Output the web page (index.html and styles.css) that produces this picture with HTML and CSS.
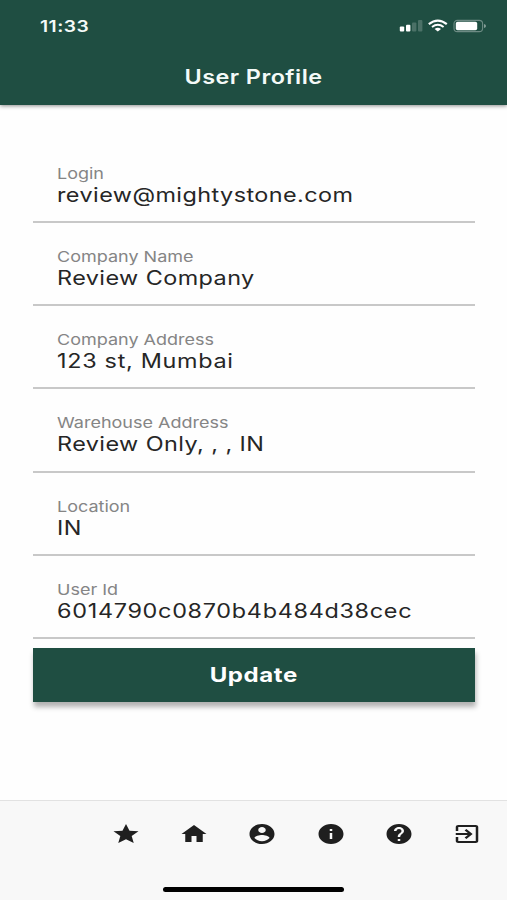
FILE: index.html
```html
<!DOCTYPE html>
<html lang="en">
<head>
<meta charset="utf-8">
<title>User Profile</title>
<link rel="stylesheet" href="styles.css">
</head>
<body>
<div class="screen">
  <header class="header">
    <div class="status">
      <span class="time">11:33</span>
      <svg class="indicators" width="88" height="16" viewBox="0 0 88 16">
        <g fill="#fff">
          <rect x="0.8" y="8.6" width="4.4" height="5" rx="1"/>
          <rect x="7" y="6.8" width="4.4" height="6.8" rx="1"/>
          <rect x="13" y="4.4" width="4.4" height="9.2" rx="1" opacity=".2"/>
          <rect x="19" y="2" width="4.4" height="11.6" rx="1" opacity=".2"/>
        </g>
        <g fill="none" stroke="#fff">
          <path d="M29.8 6.1Q38.8-1 47.8 6.1" stroke-width="2.2"/>
          <path d="M33 9Q38.8 4.6 44.6 9" stroke-width="2"/>
        </g>
        <path d="M35.6 10.9Q38.8 8.6 42 10.9L38.8 13.6Z" fill="#fff"/>
        <rect x="55" y="2.4" width="28.6" height="11.2" rx="3.4" fill="none" stroke="#fff" stroke-opacity=".35" stroke-width="1.1"/>
        <rect x="56.8" y="3.8" width="21.4" height="8.4" rx="1.8" fill="#fff"/>
        <path d="M85 6V10Q87 9.4 87 8T85 6Z" fill="#fff" opacity=".45"/>
      </svg>
    </div>
    <h1 class="title"><span>User Profile</span></h1>
  </header>
  <main class="content">
    <dl class="fields">
      <div class="field"><dt>Login</dt><dd>review@mightystone.com</dd></div>
      <div class="field"><dt>Company Name</dt><dd>Review Company</dd></div>
      <div class="field"><dt>Company Address</dt><dd class="numeric">123 st, Mumbai</dd></div>
      <div class="field"><dt>Warehouse Address</dt><dd>Review Only, , , IN</dd></div>
      <div class="field"><dt>Location</dt><dd>IN</dd></div>
      <div class="field"><dt>User Id</dt><dd class="numeric">6014790c0870b4b484d38cec</dd></div>
    </dl>
    <button class="update" type="button"><span>Update</span></button>
  </main>
  <footer class="footer">
    <nav class="tabs">
      <svg class="icon" viewBox="0 0 24 24" preserveAspectRatio="none"><path d="M12 17.27 18.18 21l-1.64-7.03L22 9.24l-7.19-.61L12 2 9.19 8.63 2 9.24l5.46 4.73L5.82 21z"/></svg>
      <svg class="icon" viewBox="0 0 24 24" preserveAspectRatio="none"><path d="M10 20v-6h4v6h5v-8h3L12 3 2 12h3v8z"/></svg>
      <svg class="icon" viewBox="0 0 24 24" preserveAspectRatio="none"><path d="M12 2C6.48 2 2 6.48 2 12s4.48 10 10 10 10-4.48 10-10S17.52 2 12 2zm0 3c1.66 0 3 1.34 3 3s-1.34 3-3 3-3-1.34-3-3 1.34-3 3-3zm0 14.2c-2.5 0-4.71-1.28-6-3.22.03-1.99 4-3.08 6-3.08 1.99 0 5.97 1.09 6 3.08-1.29 1.94-3.5 3.22-6 3.22z"/></svg>
      <svg class="icon" viewBox="0 0 24 24" preserveAspectRatio="none"><path d="M12 2C6.48 2 2 6.48 2 12s4.48 10 10 10 10-4.48 10-10S17.52 2 12 2zm1 15h-2v-6h2v6zm0-8h-2V7h2v2z"/></svg>
      <svg class="icon" viewBox="0 0 24 24" preserveAspectRatio="none"><path d="M12 2C6.48 2 2 6.48 2 12s4.48 10 10 10 10-4.48 10-10S17.52 2 12 2zm1 17h-2v-2h2v2zm2.07-7.75-.9.92C13.45 12.9 13 13.5 13 15h-2v-.5c0-1.1.45-2.1 1.17-2.83l1.24-1.26c.37-.36.59-.86.59-1.41 0-1.1-.9-2-2-2s-2 .9-2 2H8c0-2.21 1.79-4 4-4s4 1.79 4 4c0 .88-.36 1.68-.93 2.25z"/></svg>
      <svg class="icon" viewBox="0 0 24 24" preserveAspectRatio="none"><path d="M10.09 15.59 11.5 17l5-5-5-5-1.41 1.41L12.67 11H3v2h9.67l-2.58 2.59zM19 3H5c-1.11 0-2 .9-2 2v4h2V5h14v14H5v-4H3v4c0 1.1.89 2 2 2h14c1.1 0 2-.9 2-2V5c0-1.1-.9-2-2-2z"/></svg>
    </nav>
    <div class="home-bar"></div>
  </footer>
</div>
</body>
</html>
```
FILE: styles.css
```css
* { box-sizing: border-box; }

body {
  margin: 0;
  background: #fefefe;
  font-family: Inter, "Liberation Sans", sans-serif;
  color: #262626;
}

.screen {
  height: 900px;
  display: flex;
  flex-direction: column;
  overflow: hidden;
}

.header {
  height: 105px;
  background: #1f4e42;
  color: #f4faf8;
  box-shadow: 0 1px 4px rgba(0, 0, 0, .45);
}

.status {
  display: flex;
  justify-content: space-between;
  padding: 18px 20px 0 40px;
  height: 53px;
}

.time {
  font-size: 16px;
  line-height: 16px;
  font-weight: 600;
  letter-spacing: .4px;
  transform: scaleX(1.2);
  transform-origin: left;
}

.title {
  margin: 0;
  text-align: center;
  font-size: 19.5px;
  line-height: 49px;
  font-weight: 600;
  letter-spacing: .38px;
}

.title span,
.update span {
  display: inline-block;
  transform: scaleX(1.2);
}

.content {
  flex: 1;
  padding: 34.5px 32px 0 33px;
}

.fields { margin: 0; }

.field {
  height: 83.25px;
  padding: 24px 0 0 24.3px;
  border-bottom: 2px solid #c8c8c8;
}

.field dt,
.field dd {
  margin: 0;
  width: max-content;
  transform: scaleX(1.2);
  transform-origin: left;
}

.field dt {
  font-size: 15px;
  line-height: 20px;
  color: #858585;
}

.field dd {
  font-size: 19.5px;
  line-height: 23px;
  letter-spacing: .36px;
}

.field .numeric { letter-spacing: .58px; }

.update {
  display: block;
  width: 100%;
  height: 54px;
  margin-top: 9px;
  padding: 0;
  border: 0;
  background: #1f4e42;
  color: #fff;
  font: 700 20px/55px Inter, "Liberation Sans", sans-serif;
  letter-spacing: .5px;
  box-shadow: 1px 5px 5px rgba(0, 0, 0, .3);
}

.footer {
  height: 100px;
  background: #f8f8f8;
  border-top: 1px solid #e2e2e2;
  display: flex;
  flex-direction: column;
  align-items: center;
}

.tabs {
  width: 100%;
  display: flex;
  justify-content: space-between;
  padding: 20.5px 24.5px 0 110.5px;
}

.icon {
  width: 30px;
  height: 24px;
  fill: #1f1f1f;
}

.home-bar {
  width: 181px;
  height: 5px;
  margin-top: 41px;
  border-radius: 3px;
  background: #000;
}
```
